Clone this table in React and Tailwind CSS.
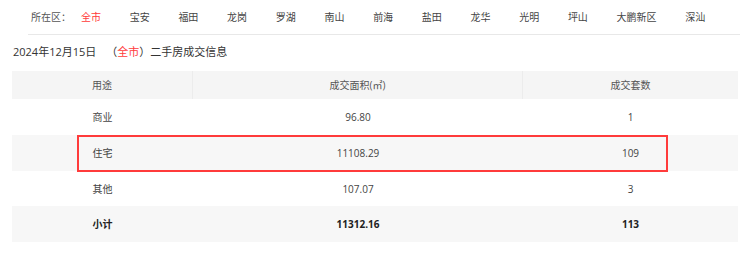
import React from "react";

const districts = ["全市", "宝安", "福田", "龙岗", "罗湖", "南山", "前海", "盐田", "龙华", "光明", "坪山", "大鹏新区", "深汕"];

const rows = [
  { name: "商业", area: "96.80", count: "1", bg: "bg-white", h: "h-[36px]" },
  { name: "住宅", area: "11108.29", count: "109", bg: "bg-[#f7f7f7]", h: "h-[36px]" },
  { name: "其他", area: "107.07", count: "3", bg: "bg-white", h: "h-[35px]" },
];

export default function App() {
  return (
    <div
      className="w-[740px] h-[259px] bg-white text-[#333] overflow-hidden"
      style={{ fontFamily: '"Open Sans", "Noto Sans CJK SC", sans-serif' }}
    >
      <div className="ml-[28px] h-[35px] border-b border-[#e8e8e8] flex items-center text-[10px] leading-none">
        <span className="ml-[3px] text-[#555] w-[50px]">所在区：</span>
        <div className="flex gap-[28.7px]">
          {districts.map((d, i) => (
            <span key={d} className={i === 0 ? "text-[#ff3b3b]" : "text-[#444]"}>
              {d}
            </span>
          ))}
        </div>
      </div>
      <div className="h-[36px] flex items-center pl-[13px] text-[11px] text-[#333] leading-none pb-[3px]">
        <span>2024年12月15日</span>
        <span className="ml-[10px]">（</span>
        <span className="text-[#ff3b3b]">全市</span>
        <span>）二手房成交信息</span>
      </div>
      <div className="relative ml-[12px] w-[726px] text-[10px] leading-none">
        <div className="grid grid-cols-[181px_330px_215px] h-[28px] bg-[#f5f5f5] text-[#555]">
          <div className="flex items-center justify-center border-r border-[#ececec]">用途</div>
          <div className="flex items-center justify-center border-r border-[#ececec]">成交面积(㎡)</div>
          <div className="flex items-center justify-center">成交套数</div>
        </div>
        {rows.map((r) => (
          <div key={r.name} className={`grid grid-cols-[181px_330px_215px] ${r.h} ${r.bg} text-[#444]`}>
            <div className="flex items-center justify-center">{r.name}</div>
            <div className="flex items-center justify-center">{r.area}</div>
            <div className="flex items-center justify-center">{r.count}</div>
          </div>
        ))}
        <div className="grid grid-cols-[181px_330px_215px] h-[36px] bg-[#f7f7f7] text-[#222] font-bold">
          <div className="flex items-center justify-center">小计</div>
          <div className="flex items-center justify-center">11312.16</div>
          <div className="flex items-center justify-center">113</div>
        </div>
        <div className="absolute left-[65px] top-[64px] w-[591px] h-[37px] border-2 border-[#ff3b3b] pointer-events-none" />
      </div>
    </div>
  );
}
